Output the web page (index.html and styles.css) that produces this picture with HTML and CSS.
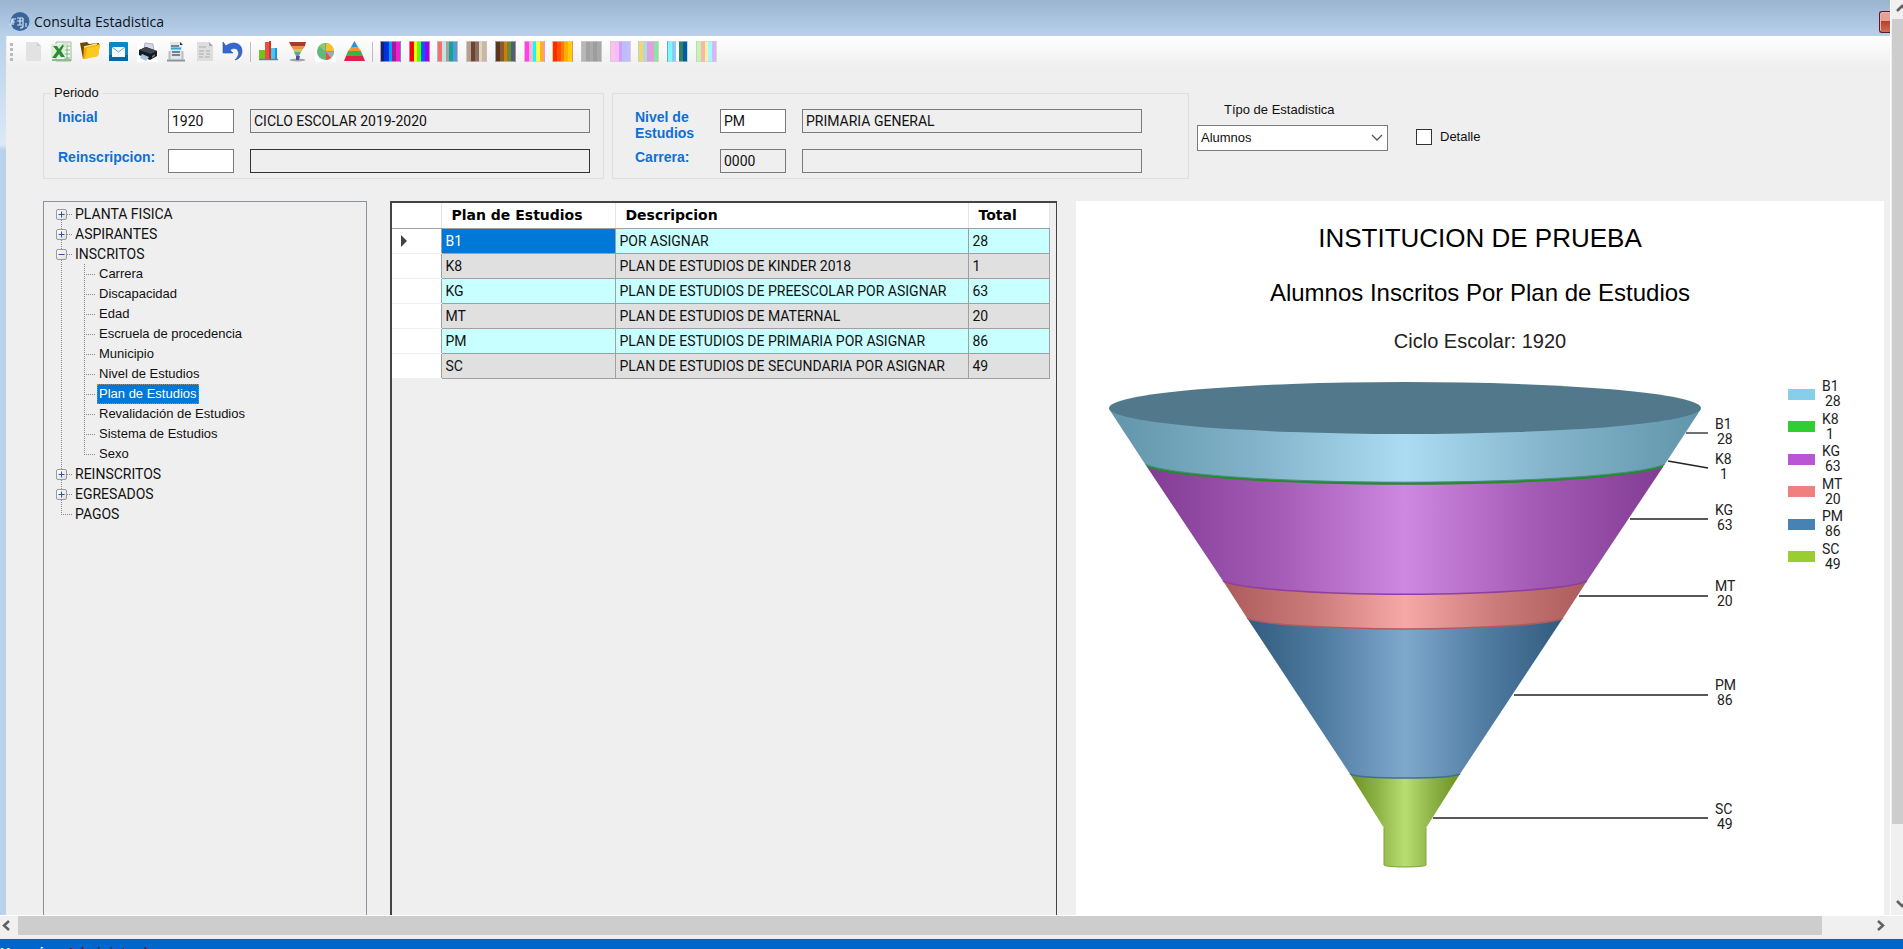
FILE: index.html
```html
<!DOCTYPE html>
<html lang="es">
<head>
<meta charset="utf-8">
<title>Consulta Estadistica</title>
<link rel="stylesheet" href="styles.css">
</head>
<body>
<div class="app">
  <div class="viewport">
    <main class="window">
      <header class="titlebar">
        <svg class="app-icon" width="21" height="21" viewBox="0 0 21 21" aria-hidden="true">
          <circle cx="11" cy="10.500" r="9.500" fill="#38659b"/>
          <path d="M0 14h2l1-6h4M4 8v6M2 11h4M8 7h6M8 10h6M8 14h5M11 7v7M14 7v8q0 2-3 2M17 12v4" fill="none" stroke="#d5e2f0" stroke-width="1.200"/>
        </svg>
        <h1 class="title">Consulta Estadistica</h1>
        <button class="close" type="button" aria-label="Cerrar"></button>
      </header>

      <div class="toolbar">
        <span class="grip"></span>
        <div class="tools tools-file">
          <button type="button" class="tool" aria-label="Nuevo"><svg viewBox="0 0 21 21"><path d="M3 1h11l4 4v15H3z" fill="#e2e2e2"/><path d="M14 1l4 4h-4z" fill="#cfcfcf"/></svg></button>
          <button type="button" class="tool" aria-label="Excel"><svg viewBox="0 0 21 21"><path d="M5 1h15v19H5z" fill="#f5faf4" stroke="#9ab898" stroke-width="1"/><path d="M13 5h6M13 9h6M13 13h6M13 17h6M16 2v17" stroke="#7fb07c"/><path d="M1 19h19" stroke="#8fbb8d" stroke-width="2"/><path d="M0 3l14 0v14H0z" fill="#dcefd9"/><path d="M2 5h4l2 3 4-5h2l-4 7 4 6h-4l-2-3-3 4H1l5-7z" fill="#2f8a35"/><path d="M11 2l9-1-6 6z" fill="#cfe6cd"/></svg></button>
          <button type="button" class="tool" aria-label="Abrir"><svg viewBox="0 0 21 21"><path d="M0 2l7-1 2 2 10-1v4L3 18z" fill="#6a4a08"/><path d="M4 6l16-3-2 12L3 18z" fill="#f5a800"/><path d="M7 7l13-3-2 11-13 3z" fill="#ffc81e"/><path d="M4 6l13-3" stroke="#ffe27a" stroke-width="1.500"/></svg></button>
          <button type="button" class="tool" aria-label="Correo"><svg viewBox="0 0 21 21"><rect x="1" y="1" width="19" height="19" rx="1" fill="#0a87c4"/><path d="M1 14h19v6H1z" fill="#0667a5"/><path d="M4 6h13v10H4z" fill="#f4fafd"/><path d="M4 6l6.500 5L17 6" fill="none" stroke="#5ba9d2"/></svg></button>
          <button type="button" class="tool" aria-label="Imprimir"><svg viewBox="0 0 21 21"><path d="M0 0h21v21H0z" fill="#fff"/><path d="M8 2l8 1 1 7-10-2z" fill="#d4dde6" stroke="#8d98a3" stroke-width=".7"/><path d="M2 9l7-3 11 4v5l-7 4-11-5z" fill="#15181c"/><path d="M2 9l7-3 11 4-6 3z" fill="#3d444c"/><path d="M5 13l7 3-3 4-6-3z" fill="#a9c6df"/><path d="M15 15l3-2v2l-3 2z" fill="#6e7780"/></svg></button>
          <button type="button" class="tool" aria-label="Reporte"><svg viewBox="0 0 21 21"><path d="M5 1h12v18H5z" fill="#e3e6e8"/><path d="M15 1l3 3h-3z" fill="#333"/><path d="M6 5h8M7 11h8M7 14h8" stroke="#4d6675" stroke-width="1.500"/><path d="M6 7.500h10" stroke="#28a9dc" stroke-width="2"/><path d="M2 19.500h18" stroke="#8f9496" stroke-width="2"/><path d="M4.500 10v9M17.500 10v9" stroke="#b9bec1" stroke-width="2"/></svg></button>
          <button type="button" class="tool" aria-label="Detalle de reporte"><svg viewBox="0 0 21 21"><path d="M3 1h12l4 4v15H3z" fill="#dedede"/><path d="M15 1l4 4h-4z" fill="#aaa"/><path d="M5 6h7M5 10h5M12 10h4M5 13h5M12 13h4M5 16h4M11 16h5" stroke="#bdbdbd" stroke-width="1.500"/></svg></button>
          <button type="button" class="tool" aria-label="Deshacer"><svg viewBox="0 0 21 21"><path d="M1 1l3 4C9 0 20 1 20 10c0 5-3 8-7 9 4-4 4-7 3-9-1-3-5-3-8-1l3 3H1z" fill="#3668cf" stroke="#2450ae" stroke-width=".6"/></svg></button>
        </div>
        <span class="divider"></span>
        <div class="tools tools-chart">
          <button type="button" class="tool" aria-label="Barras"><svg viewBox="0 0 21 21"><path d="M1 9h6v9H1z" fill="#74c21c"/><path d="M7 11h3v7H7z" fill="#b5781d"/><path d="M7 1h6v17H7z" fill="#e8503c"/><path d="M11 0h2v18h-2z" fill="#c93422"/><path d="M13 7h6v11h-6z" fill="#4cc4f5"/><path d="M17 7h2v11h-2z" fill="#1f91d8"/><path d="M1 18.500h19" stroke="#6d7e8a" stroke-width="1.500"/></svg></button>
          <button type="button" class="tool" aria-label="Embudo"><svg viewBox="0 0 21 21"><path d="M2 1h17l-1 4H4z" fill="#a33c38"/><path d="M4 5h14l-2 3H6z" fill="#e2954e"/><path d="M6 8h10l-2 3H7z" fill="#c9c75c"/><path d="M7 11h7l-2 4H9z" fill="#57a98d"/><ellipse cx="10.500" cy="19" rx="8" ry="1.500" fill="#a5a5a5"/><path d="M9 15h4l-1 4H9z" fill="#4b4f98"/></svg></button>
          <button type="button" class="tool" aria-label="Pastel"><svg viewBox="0 0 21 21"><path d="M0 0h21v21H0z" fill="#fff"/><circle cx="10.500" cy="10.500" r="8.500" fill="#62b878"/><path d="M11 10V2a8.500 8.500 0 0 1 8 8z" fill="#fbbf23"/><path d="M11 11h8a8.500 8.500 0 0 1-3 6z" fill="#a2aab0"/><path d="M11 11l5 6a8.500 8.500 0 0 1-5 2z" fill="#f04d43"/><path d="M10 2v8L4 5z" fill="#8fca66"/></svg></button>
          <button type="button" class="tool" aria-label="Pirámide"><svg viewBox="0 0 21 21"><path d="M10.500 0L14 6H7z" fill="#2795de"/><path d="M7 6h7l3 4H4z" fill="#fb9622"/><path d="M4 10h13l2 5H2z" fill="#35b748"/><path d="M2 15h17l2 5H0z" fill="#e41e4b"/></svg></button>
        </div>
        <span class="divider"></span>
        <div class="tools tools-palette">
          <button type="button" class="swatch p1" aria-label="Paleta 1"></button>
          <button type="button" class="swatch p2" aria-label="Paleta 2"></button>
          <button type="button" class="swatch p3" aria-label="Paleta 3"></button>
          <button type="button" class="swatch p4" aria-label="Paleta 4"></button>
          <button type="button" class="swatch p5" aria-label="Paleta 5"></button>
          <button type="button" class="swatch p6" aria-label="Paleta 6"></button>
          <button type="button" class="swatch p7" aria-label="Paleta 7"></button>
          <button type="button" class="swatch p8" aria-label="Paleta 8"></button>
          <button type="button" class="swatch p9" aria-label="Paleta 9"></button>
          <button type="button" class="swatch p10" aria-label="Paleta 10"></button>
          <button type="button" class="swatch p11" aria-label="Paleta 11"></button>
          <button type="button" class="swatch p12" aria-label="Paleta 12"></button>
        </div>
      </div>

      <form class="filters">
        <fieldset class="group group-period">
          <legend>Periodo</legend>
          <div class="fields">
            <label for="inicial">Inicial</label>
            <input id="inicial" class="field" value="1920">
            <input class="field wide" aria-label="Periodo inicial" value="CICLO ESCOLAR 2019-2020" readonly>
            <label for="reins">Reinscripcion:</label>
            <input id="reins" class="field" value="">
            <input class="field wide strong" aria-label="Periodo de reinscripcion" value="" readonly>
          </div>
        </fieldset>
        <div class="group group-level">
          <div class="fields">
            <label for="nivel">Nivel de Estudios</label>
            <input id="nivel" class="field" value="PM">
            <input class="field wide" aria-label="Nivel" value="PRIMARIA GENERAL" readonly>
            <label for="carrera">Carrera:</label>
            <input id="carrera" class="field" value="0000" readonly>
            <input class="field wide" aria-label="Nombre de carrera" value="" readonly>
          </div>
        </div>
        <div class="type">
          <label for="tipo">Típo de Estadistica</label>
          <div class="select-wrap">
            <select id="tipo"><option>Alumnos</option></select>
            <svg width="12" height="8" viewBox="0 0 12 8" aria-hidden="true"><path d="M1 1l5 5 5-5" fill="none" stroke="#555" stroke-width="1.300"/></svg>
          </div>
        </div>
        <label class="detail"><input type="checkbox"> Detalle</label>
      </form>

      <div class="work">
        <nav class="tree-panel" aria-label="Estadisticas">
          <ul class="tree">
            <li><button class="expander" type="button" aria-label="Expandir"><svg viewBox="0 0 11 11"><path d="M2.500 5.500h6M5.500 2.500v6"/></svg></button><a href="#">PLANTA FISICA</a></li>
            <li><button class="expander" type="button" aria-label="Expandir"><svg viewBox="0 0 11 11"><path d="M2.500 5.500h6M5.500 2.500v6"/></svg></button><a href="#">ASPIRANTES</a></li>
            <li><button class="expander" type="button" aria-label="Contraer"><svg viewBox="0 0 11 11"><path d="M2.500 5.500h6"/></svg></button><a href="#">INSCRITOS</a>
              <ul class="branch">
                <li><a href="#">Carrera</a></li>
                <li><a href="#">Discapacidad</a></li>
                <li><a href="#">Edad</a></li>
                <li><a href="#">Escruela de procedencia</a></li>
                <li><a href="#">Municipio</a></li>
                <li><a href="#">Nivel de Estudios</a></li>
                <li><a href="#" class="selected">Plan de Estudios</a></li>
                <li><a href="#">Revalidación de Estudios</a></li>
                <li><a href="#">Sistema de Estudios</a></li>
                <li><a href="#">Sexo</a></li>
              </ul>
            </li>
            <li><button class="expander" type="button" aria-label="Expandir"><svg viewBox="0 0 11 11"><path d="M2.500 5.500h6M5.500 2.500v6"/></svg></button><a href="#">REINSCRITOS</a></li>
            <li><button class="expander" type="button" aria-label="Expandir"><svg viewBox="0 0 11 11"><path d="M2.500 5.500h6M5.500 2.500v6"/></svg></button><a href="#">EGRESADOS</a></li>
            <li class="leaf"><a href="#">PAGOS</a></li>
          </ul>
        </nav>

        <div class="grid-panel">
          <table>
            <colgroup><col class="c-mark"><col class="c-plan"><col class="c-desc"><col class="c-total"></colgroup>
            <thead><tr><th></th><th>Plan de Estudios</th><th>Descripcion</th><th>Total</th></tr></thead>
            <tbody>
              <tr><th><svg width="7" height="12" viewBox="0 0 7 12"><path d="M1 0l6 6-6 6z" fill="#444"/></svg></th><td class="current">B1</td><td>POR ASIGNAR</td><td>28</td></tr>
              <tr><th></th><td>K8</td><td>PLAN DE ESTUDIOS DE KINDER 2018</td><td>1</td></tr>
              <tr><th></th><td>KG</td><td>PLAN DE ESTUDIOS DE PREESCOLAR POR ASIGNAR</td><td>63</td></tr>
              <tr><th></th><td>MT</td><td>PLAN DE ESTUDIOS DE MATERNAL</td><td>20</td></tr>
              <tr><th></th><td>PM</td><td>PLAN DE ESTUDIOS DE PRIMARIA POR ASIGNAR</td><td>86</td></tr>
              <tr><th></th><td>SC</td><td>PLAN DE ESTUDIOS DE SECUNDARIA POR ASIGNAR</td><td>49</td></tr>
            </tbody>
          </table>
        </div>

        <section class="chart-panel">
          <h2>INSTITUCION DE PRUEBA</h2>
          <h3>Alumnos Inscritos Por Plan de Estudios</h3>
          <p>Ciclo Escolar: 1920</p>
          <svg class="chart" viewBox="0 153 808 561" role="img" aria-label="Embudo de alumnos inscritos">
            <defs>
              <linearGradient id="gB1"><stop offset="0" stop-color="#6195aa"/><stop offset=".25" stop-color="#82b3ca"/><stop offset=".5" stop-color="#abdcf2"/><stop offset=".75" stop-color="#82b3ca"/><stop offset="1" stop-color="#6195aa"/></linearGradient>
              <linearGradient id="gKG"><stop offset="0" stop-color="#833c94"/><stop offset=".25" stop-color="#a35bb6"/><stop offset=".5" stop-color="#cf88e2"/><stop offset=".75" stop-color="#a35bb6"/><stop offset="1" stop-color="#833c94"/></linearGradient>
              <linearGradient id="gMT"><stop offset="0" stop-color="#ab5b5b"/><stop offset=".25" stop-color="#cb7b79"/><stop offset=".5" stop-color="#f6a8a7"/><stop offset=".75" stop-color="#cb7b79"/><stop offset="1" stop-color="#ab5b5b"/></linearGradient>
              <linearGradient id="gPM"><stop offset="0" stop-color="#315b7e"/><stop offset=".25" stop-color="#517da3"/><stop offset=".5" stop-color="#7fa8cd"/><stop offset=".75" stop-color="#517da3"/><stop offset="1" stop-color="#315b7e"/></linearGradient>
              <linearGradient id="gSC"><stop offset="0" stop-color="#6c9123"/><stop offset=".25" stop-color="#8db245"/><stop offset=".5" stop-color="#b8de72"/><stop offset=".75" stop-color="#8db245"/><stop offset="1" stop-color="#6c9123"/></linearGradient>
            </defs>
            <path d="M274 574L308 628V665A21 2 0 0 0 350 665V628L384 574Z" fill="url(#gSC)"/>
            <path d="M308 628V665A21 2 0 0 0 350 665V628" fill="none" stroke="#7fa632"/>
            <path d="M171 418L274 574A56 5 0 0 0 384 574L487 418Z" fill="url(#gPM)"/>
            <path d="M274 574A56 5 0 0 0 384 574" fill="none" stroke="#3f6f98" stroke-width="1.500"/>
            <path d="M147 381L171 418A160 13 0 0 0 487 418L511 381Z" fill="url(#gMT)"/>
            <path d="M171 418A160 13 0 0 0 487 418" fill="none" stroke="#b05c5f" stroke-width="1.500"/>
            <path d="M71 267L147 381A185 16 0 0 0 511 381L587 267Z" fill="url(#gKG)"/>
            <path d="M147 381A185 16 0 0 0 511 381" fill="none" stroke="#8d409f" stroke-width="1.500"/>
            <path d="M69 263L71 267A263 22 0 0 0 587 267L589 263Z" fill="#248c2a"/>
            <path d="M33 209L69 264A264 22 0 0 0 589 264L625 209Z" fill="url(#gB1)"/>
            <path d="M69 264A264 22 0 0 0 589 264" fill="none" stroke="#4c8c84"/>
            <ellipse cx="329" cy="208" rx="296" ry="26" fill="#51798b"/>
            <g class="leaders">
              <path d="M610 233H632"/><path d="M592 261L632 268"/><path d="M554 319H632"/>
              <path d="M503 396H632"/><path d="M438 495H632"/><path d="M357 618H632"/>
            </g>
            <g class="labels">
              <text x="639" y="229">B1</text><text x="641" y="244">28</text>
              <text x="639" y="264">K8</text><text x="644" y="279">1</text>
              <text x="639" y="315">KG</text><text x="641" y="330">63</text>
              <text x="639" y="391">MT</text><text x="641" y="406">20</text>
              <text x="639" y="490">PM</text><text x="641" y="505">86</text>
              <text x="639" y="614">SC</text><text x="641" y="629">49</text>
            </g>
            <g>
              <rect x="712" y="189" width="27" height="11" fill="#87ceeb"/>
              <rect x="712" y="221" width="27" height="11" fill="#32cd32"/>
              <rect x="712" y="254" width="27" height="11" fill="#ba55d3"/>
              <rect x="712" y="286" width="27" height="11" fill="#f08080"/>
              <rect x="712" y="319" width="27" height="11" fill="#4682b4"/>
              <rect x="712" y="351" width="27" height="11" fill="#9acd32"/>
            </g>
            <g class="labels">
              <text x="746" y="191">B1</text><text x="749" y="206">28</text>
              <text x="746" y="224">K8</text><text x="750" y="239">1</text>
              <text x="746" y="256">KG</text><text x="749" y="271">63</text>
              <text x="746" y="289">MT</text><text x="749" y="304">20</text>
              <text x="746" y="321">PM</text><text x="749" y="336">86</text>
              <text x="746" y="354">SC</text><text x="749" y="369">49</text>
            </g>
          </svg>
        </section>
      </div>
    </main>
    <div class="vscroll" aria-hidden="true">
      <svg width="11" height="19" viewBox="0 0 11 19"><path d="M5 11l5-5 5 5" fill="none" stroke="#606060" stroke-width="2.500"/></svg>
      <span class="vthumb"></span>
      <span class="vspace"></span>
      <svg width="11" height="19" viewBox="0 0 11 19"><path d="M5 5l5 5 5-5" fill="none" stroke="#606060" stroke-width="2.500"/></svg>
    </div>
  </div>
  <div class="hscroll" aria-hidden="true">
    <svg width="18" height="19" viewBox="0 0 18 19"><path d="M9 5L4 9.500 9 14" fill="none" stroke="#606060" stroke-width="2.500"/></svg>
    <span class="hthumb"></span>
    <svg width="81" height="19" viewBox="0 0 81 19"><path d="M56 5l5 4.500-5 4.500" fill="none" stroke="#606060" stroke-width="2.500"/></svg>
  </div>
  <footer class="status"><span>Usuario</span><span class="user">Administrador</span></footer>
</div>
</body>
</html>
```
FILE: styles.css
```css
* { box-sizing: border-box; }

body {
  margin: 0;
  background: #efefef;
  color: #111;
  font: 14px/16px Roboto, "Liberation Sans", sans-serif;
}

button, input, select { font: inherit; color: inherit; margin: 0; padding: 0; border: 0; border-radius: 0; }
ul { list-style: none; margin: 0; padding: 0; }
a { color: inherit; text-decoration: none; }

.app { display: flex; flex-direction: column; height: 100vh; overflow: hidden; }
.viewport { display: flex; flex: 1; min-height: 0; border-bottom: 1px solid #fff; }

.window {
  display: flex;
  flex-direction: column;
  flex: 1;
  min-width: 0;
  overflow: hidden;
  border-right: 1px solid #fff;
  background: linear-gradient(#9ab4d1 0, #b9d1ea 36px, #dce9f6 145px, #b9d1ea 150px) 0 0 / 6px 100% no-repeat #efefef;
}

/* Title bar */
.titlebar {
  display: flex;
  align-items: center;
  flex: none;
  height: 36px;
  padding: 7px 0 0 9px;
  background: linear-gradient(#9ab4d1, #b9d1ea);
}
.title { flex: 1; margin: 0 0 0 4px; font: 14px/20px "Open Sans", "Noto Sans", sans-serif; color: #0a1420; }
.close {
  width: 11px;
  height: 22px;
  border: 1px solid #5c1a24;
  border-right: 0;
  border-radius: 3px 0 0 3px;
  box-shadow: inset 1px 1px 0 #e9b4ac;
  background: linear-gradient(#e5a195 45%, #b83d25 46%, #cf6f58);
}

/* Toolbar */
.toolbar {
  display: flex;
  align-items: center;
  flex: none;
  height: 31px;
  margin-left: 7px;
  padding: 0 0 0 3px;
  background: linear-gradient(#fff, #efefef);
}
.grip { width: 3px; height: 18px; margin-right: 10px; background: repeating-linear-gradient(#bbb 0 3px, transparent 3px 5px); }
.tools { display: flex; justify-content: space-between; }
.tools-file { width: 220px; }
.tools-chart { width: 107px; }
.tools-palette { width: 337px; }
.tool { width: 21px; height: 21px; background: none; }
.tool svg { display: block; width: 21px; height: 21px; }
.divider { width: 1px; height: 20px; margin: 0 7px; background: #bdbdbd; }
.swatch { width: 21px; height: 21px; border: 1px solid rgba(210, 210, 210, 0.6); }
.p1 { background: linear-gradient(90deg, #002a6b 18%, #0030e0 18% 40%, #00a0ff 40% 60%, #a81896 60% 80%, #f01ed2 80%); }
.p2 { background: linear-gradient(90deg, #f00 20%, #ff0 20% 38%, #5f0 38% 60%, #0060ff 60% 80%, #90f 80%); }
.p3 { background: linear-gradient(90deg, #ff6b6b 20%, #b9e8e6 20% 40%, #b59a9a 40% 60%, #10a596 60% 80%, #4a9ee0 80%); }
.p4 { background: linear-gradient(90deg, #b5a08f 22%, #6b4436 22% 42%, #8a6c60 42% 62%, #e0d6bd 62% 80%, #c8b8aa 80%); }
.p5 { background: linear-gradient(90deg, #5e341c 20%, #875a36 20% 40%, #d67b00 40% 60%, #668a3a 60% 80%, #4c6072 80%); }
.p6 { background: linear-gradient(90deg, #ff3dff 20%, #ffb6c4 20% 40%, #00ffff 40% 60%, #ffff3d 60% 80%, #ffaa3d 80%); }
.p7 { background: linear-gradient(90deg, #ff2a00 20%, #ff5200 20% 40%, #ff7a00 40% 60%, #ffab00 60% 80%, #ffcf00 80%); }
.p8 { background: linear-gradient(90deg, #b7b7b7 20%, #a2a2a2 20% 40%, #ababab 40% 60%, #9d9d9d 60% 80%, #a8a8a8 80%); }
.p9 { background: linear-gradient(90deg, #ffc0ec 20%, #f5bdf5 20% 40%, #cf9eff 40% 60%, #bdbcff 60% 80%, #c5bdf9 80%); }
.p10 { background: linear-gradient(90deg, #f5d36e 20%, #b0dbd8 20% 40%, #d8a3e5 40% 60%, #e89cdb 60% 80%, #85e6a8 80%); }
.p11 { background: linear-gradient(90deg, #78fbff 20%, #8ccbf2 20% 40%, #fff 40% 58%, #2c8560 58% 78%, #0458a5 78%); }
.p12 { background: linear-gradient(90deg, #bdfda0 20%, #ffb2b5 20% 40%, #fff3a0 40% 60%, #a0fbff 60% 80%, #dab2ff 80%); }

/* Filters */
.filters { display: flex; align-items: flex-start; flex: none; margin: 18px 0 0 43px; }
.group { margin: 0; border: 1px solid #dedede; }
.group-period { width: 561px; padding: 8px 0 5px 14px; }
.group-period legend { margin-left: -7px; padding: 0 3px; font: 13px/16px "Liberation Sans", sans-serif; }
.group-level { width: 577px; margin: 8px 0 0 8px; padding: 15px 0 5px 22px; }
.fields { display: grid; grid-template-columns: 110px 66px 340px; gap: 16px 0; grid-auto-rows: 24px; }
.fields .wide { margin-left: 16px; width: 340px; }
.group-level .fields { grid-template-columns: 85px 66px 340px; }
.fields label { font: bold 14px/16px "Liberation Sans", sans-serif; color: #0f6fd6; }
.group-level label { width: 60px; }
.field { width: 66px; height: 24px; padding: 0 3px; border: 1px solid #7a7a7a; background: #fff; }
.field:read-only { background: #efefef; }
.strong { border-color: #333; }
.type, .detail { font: 13px/16px "Liberation Sans", sans-serif; }
.type { display: grid; gap: 7px; width: 191px; margin: 17px 0 0 8px; }
.type > label { padding-left: 27px; }
.select-wrap { display: grid; align-items: center; }
.select-wrap > * { grid-area: 1 / 1; }
.select-wrap svg { justify-self: end; margin-right: 5px; pointer-events: none; }
select { appearance: none; width: 100%; height: 26px; padding: 0 3px; border: 1px solid #7a7a7a; background: #fff; }
.detail { display: flex; align-items: center; gap: 8px; margin: 44px 0 0 28px; }
.detail input { appearance: none; width: 16px; height: 16px; border: 1px solid #333; background: #fff; }

/* Panels */
.work { display: flex; flex: 1; min-height: 0; margin: 22px 6px 0 43px; }
.tree-panel { flex: none; width: 324px; padding: 2px 0 0; border: 1px solid #8d919b; border-bottom: 0; }

.tree > li {
  padding-left: 12px;
  background:
    repeating-linear-gradient(#8a8a8a 0 1px, transparent 1px 2px) 17px 0 / 1px 100% no-repeat,
    repeating-linear-gradient(90deg, #8a8a8a 0 1px, transparent 1px 2px) 17px 10px / 12px 1px no-repeat;
}
.tree > li:first-child { background-position: 17px 10px, 17px 10px; }
.tree > li.leaf { padding-left: 29px; background-size: 1px 10px, 12px 1px; }
.tree a { display: inline-block; padding: 1px 2px; line-height: 18px; vertical-align: top; }
.expander {
  width: 11px;
  height: 11px;
  margin: 5px 6px 4px 0;
  border: 1px solid #9a9a9a;
  border-radius: 2px;
  background: linear-gradient(135deg, #fff, #dcdcdc);
  vertical-align: top;
}
.expander svg { display: block; width: 11px; height: 11px; margin: -1px; stroke: #3553a5; }
.branch { padding-left: 28px; font: 13px/20px "Liberation Sans", sans-serif; }
.branch li {
  padding-left: 13px;
  background:
    repeating-linear-gradient(#8a8a8a 0 1px, transparent 1px 2px) 0 0 / 1px 100% no-repeat,
    repeating-linear-gradient(90deg, #8a8a8a 0 1px, transparent 1px 2px) 0 10px / 12px 1px no-repeat;
}
.branch li:last-child { background-size: 1px 10px, 12px 1px; }
.branch .selected { background: #0078d7; color: #fff; outline: 1px dotted #d98026; outline-offset: -1px; }

.grid-panel { flex: none; width: 667px; margin-left: 23px; border: 2px solid #444; border-width: 2px 1px 0 2px; }
table { width: 658px; table-layout: fixed; border-collapse: collapse; }
.c-mark { width: 49px; }
.c-plan { width: 174px; }
.c-desc { width: 353px; }
th, td { height: 25px; padding: 0 4px; text-align: left; font-weight: normal; white-space: nowrap; }
td { border: 1px solid #a0a0a0; }
thead th {
  height: 25px;
  padding: 0 10px;
  border-right: 1px solid #e5e5e5;
  border-bottom: 1px solid #a0a0a0;
  background: #fff;
  font: bold 14px/16px "DejaVu Sans", sans-serif;
  color: #000;
}
tbody th { padding-left: 8px; border-bottom: 1px solid #efefef; background: #fff; }
tbody th svg { display: block; }
tbody tr:nth-child(odd) td { background: #c8ffff; }
tbody tr:nth-child(even) td { background: #e0e0e0; }
tbody tr td.current { background: #0078d7; color: #fff; }

.chart-panel {
  flex: 1;
  min-width: 0;
  margin-left: 19px;
  overflow: hidden;
  background: #fff;
  color: #000;
  font-family: "Liberation Sans", sans-serif;
  text-align: center;
}
.chart-panel h2 { margin: 22px 0 26px; font-size: 26px; line-height: 30px; font-weight: normal; }
.chart-panel h3 { margin: 0 0 22px; font-size: 24px; line-height: 28px; font-weight: normal; }
.chart-panel p { margin: 0; font-size: 20px; line-height: 24px; color: #222; }
.chart { display: block; width: 100%; }
.leaders { fill: none; stroke: #222; stroke-width: 1.3; }
.labels { font: 14px Roboto, "Liberation Sans", sans-serif; fill: #222; }

/* Scrollbars and status */
.vscroll { display: flex; flex-direction: column; flex: none; width: 12px; padding-left: 1px; background: #f0f0f0; }
.vthumb { flex: 805; background: #cdcdcd; }
.vspace { flex: 72; }
.hscroll { display: flex; flex: none; height: 21px; background: #f0f0f0; }
.hthumb { flex: 1; height: 19px; background: #cdcdcd; }
.status {
  display: flex;
  flex: none;
  gap: 14px;
  height: 12px;
  padding-top: 6px;
  overflow: hidden;
  border-top: 2px solid #e8eef5;
  background: #0066cc;
  color: #fff;
  font: bold 14px/16px "Liberation Sans", sans-serif;
}
.user { color: #8b1020; }
```
